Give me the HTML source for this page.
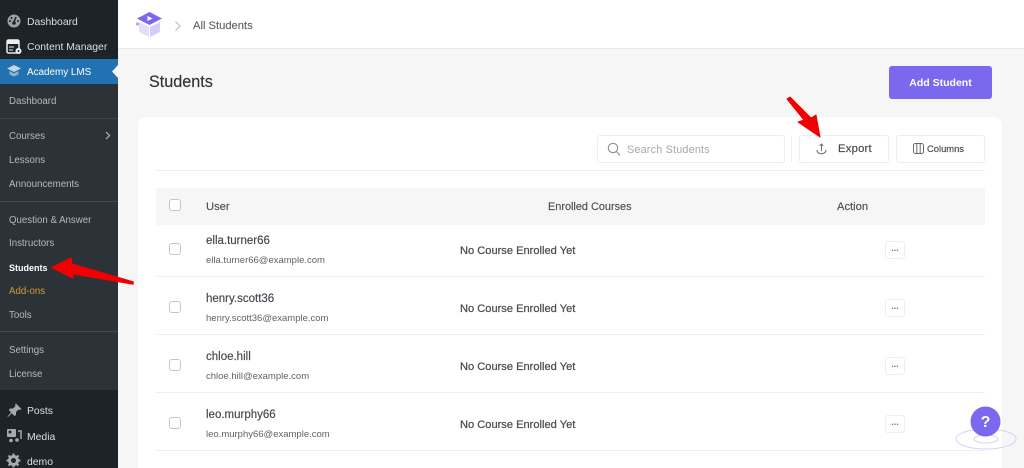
<!DOCTYPE html>
<html><head><meta charset="utf-8"><style>
html,body{margin:0;padding:0;height:468px;overflow:hidden}
body{width:1024px;position:relative;background:#f6f6f7;font-family:"Liberation Sans",sans-serif}
.a{position:absolute;white-space:nowrap}
.m{color:#dcdfe2;font-size:10.4px;left:27px;line-height:14px;margin-top:1px}
.s{color:#b4b9be;font-size:9.7px;left:9px;line-height:14px;margin-top:1px}
.cb{position:absolute;left:169px;width:10px;height:10px;border:1px solid #c4c6c9;border-radius:3px;background:#fff}
.n{left:206px;font-size:11.5px;color:#41464d;line-height:14px;margin-top:1px;-webkit-text-stroke:.15px #41464d}
.e{left:206px;font-size:9.5px;color:#5d636b;line-height:12px;margin-top:1px}
.c{left:460px;font-size:11.1px;color:#4a4f55;line-height:14px;margin-top:1px;-webkit-text-stroke:.25px #4a4f55}
.l{position:absolute;left:156px;width:829px;height:1px;background:#f0f0f1}
.d{position:absolute;left:885px;width:18px;height:16px;border:1px solid #efeff1;border-radius:3px;background:#fff;color:#777;font-size:9px;line-height:12px;text-align:center;font-weight:bold}
.b{position:absolute;background:#fff;border:1px solid #eeeef0;border-radius:3px;box-sizing:border-box}
.h{top:200px;color:#4a4f55;line-height:14px;-webkit-text-stroke:.15px #4a4f55}
</style></head><body>
<div class="a" style="left:0;top:0;width:118px;height:468px;background:#1d2327"></div>
<div class="a" style="left:0;top:84px;width:118px;height:306px;background:#2c3338"></div>
<div class="a" style="left:0;top:59px;width:118px;height:25px;background:#2271b1"></div>
<svg class="a" style="left:112px;top:65px" width="6" height="13"><path d="M6 0V13L0 6.500Z" fill="#f6f6f7"/></svg>
<div class="a" style="left:0;top:118px;width:118px;height:1px;background:#3c4349"></div>
<div class="a" style="left:0;top:201px;width:118px;height:1px;background:#42484d"></div>
<div class="a" style="left:0;top:331px;width:118px;height:1px;background:#42484d"></div>

<svg class="a" style="left:6px;top:13px" width="16" height="16" viewBox="0 0 16 16"><circle cx="8" cy="8" r="6.500" fill="#9ca1a7"/><path d="M8 9L10 4" stroke="#1d2327" stroke-width="1.500"/><circle cx="4" cy="8" r="1" fill="#1d2327"/><circle cx="5.500" cy="5" r="1" fill="#1d2327"/><circle cx="12" cy="8" r="1" fill="#1d2327"/><circle cx="8" cy="10" r="1.800" fill="#1d2327"/></svg>
<svg class="a" style="left:6px;top:39px" width="16" height="16" viewBox="0 0 16 16"><rect x="1" y="1" width="12" height="13" rx="1.500" fill="none" stroke="#eee" stroke-width="1.500"/><rect x="1" y="1" width="12" height="4" fill="#eee"/><path d="M3 8h5M3 11h4" stroke="#eee"/><circle cx="12.500" cy="12" r="3" fill="#eee"/><circle cx="12.500" cy="12" r="1" fill="#1d2327"/></svg>
<svg class="a" style="left:6px;top:64px" width="16" height="14" viewBox="0 0 16 14"><path d="M1 4.500L8 1l7 3.500L8 8Z" fill="#c3d4e2"/><path d="M3.500 7v3.500L8 12.500l4.500-2V7L8 9.500Z" fill="#8fb3d1"/></svg>
<div class="a m" style="top:15px">Dashboard</div>
<div class="a m" style="top:40px">Content Manager</div>
<div class="a m" style="top:65px;color:#fff;font-size:9.900px">Academy LMS</div>
<div class="a s" style="top:94px">Dashboard</div>
<div class="a s" style="top:129px">Courses</div>
<svg class="a" style="left:105px;top:131px" width="6" height="9"><path d="M1 1L4.500 4.500L1 8" fill="none" stroke="#b4b9be" stroke-width="1.200"/></svg>
<div class="a s" style="top:153px">Lessons</div>
<div class="a s" style="top:177px">Announcements</div>
<div class="a s" style="top:213px">Question &amp; Answer</div>
<div class="a s" style="top:236px">Instructors</div>
<div class="a s" style="top:260px;color:#fff;font-weight:bold;font-size:9px">Students</div>
<div class="a s" style="top:284px;color:#d09a35">Add-ons</div>
<div class="a s" style="top:308px">Tools</div>
<div class="a s" style="top:343px">Settings</div>
<div class="a s" style="top:367px">License</div>
<svg class="a" style="left:7px;top:403px" width="15" height="15" viewBox="0 0 15 15"><path d="M9 0.500L14.500 6L13 7L11.500 6.500L9 9L9 12L7.500 13L4.800 10.200L1 14L0.500 13.500L4 9.500L1.800 7L3 5.500H6L8.500 3L8 1.800Z" fill="#a7aaad"/></svg>
<svg class="a" style="left:6px;top:428px" width="16" height="15" viewBox="0 0 16 15"><rect x="1" y="1" width="9" height="8" rx="1" fill="#a7aaad"/><circle cx="4" cy="4" r="1.500" fill="#1d2327"/><path d="M12 3h3v8" fill="none" stroke="#a7aaad" stroke-width="1.500"/><circle cx="5" cy="12.500" r="1.800" fill="#a7aaad"/><circle cx="11" cy="12" r="1.800" fill="#a7aaad"/></svg>
<svg class="a" style="left:6px;top:453px" width="15" height="15" viewBox="0 0 15 15"><circle cx="7.500" cy="7.500" r="4" fill="none" stroke="#a7aaad" stroke-width="3"/><path d="M7.500 0.500v3M7.500 11.500v3M0.500 7.500h3M11.500 7.500h3M2.500 2.500l2 2M10.500 10.500l2 2M12.500 2.500l-2 2M4.500 10.500l-2 2" stroke="#a7aaad" stroke-width="2"/></svg>
<div class="a m" style="top:404px">Posts</div>
<div class="a m" style="top:430px">Media</div>
<div class="a m" style="top:455px">demo</div>

<div class="a" style="left:118px;top:0;width:906px;height:48px;background:#fff;border-bottom:1px solid #e9e9eb"></div>
<svg class="a" style="left:135px;top:11px" width="29" height="27" viewBox="0 0 29 27"><path d="M14.500 1L27 7.500L14.500 14L2 7.500Z" fill="#7b68ee"/><path d="M12.500 5L17.500 7.500L12.500 10Z" fill="#fff"/><path d="M4 11L14 16V26L4 21Z" fill="#e2defc"/><path d="M25 11L15 16V26L25 21Z" fill="#d3cdfa"/><circle cx="2.500" cy="13" r="1.500" fill="#a99df5"/></svg>
<svg class="a" style="left:174px;top:21px" width="8" height="10"><path d="M1.500 .5L6 5L1.500 9.500" fill="none" stroke="#b5b7ba" stroke-width="1"/></svg>
<div class="a" style="left:193px;top:19px;font-size:11.2px;color:#62666c;line-height:14px;-webkit-text-stroke:.15px #62666c">All Students</div>
<div class="a" style="left:149px;top:73px;font-size:16.2px;color:#2e3137;line-height:19px;-webkit-text-stroke:.15px #2e3137">Students</div>
<div class="a" style="left:889px;top:66px;width:103px;height:33px;background:#7b68ee;border-radius:3px;color:#fff;font-size:10.500px;font-weight:bold;line-height:34px;text-align:center">Add Student</div>

<div class="a" style="left:138px;top:117px;width:864px;height:351px;background:#fff;border-radius:8px 8px 0 0"></div>
<div class="b" style="left:597px;top:135px;width:188px;height:28px"></div>
<svg class="a" style="left:607px;top:142px" width="14" height="15" viewBox="0 0 14 15"><circle cx="6" cy="6" r="4.700" fill="none" stroke="#8f9297" stroke-width="1.100"/><path d="M9.500 9.500L13 13.500" stroke="#8f9297" stroke-width="1.100"/></svg>
<div class="a" style="left:627px;top:143px;font-size:10.800px;color:#a4a7ab;line-height:14px;letter-spacing:.2px">Search Students</div>
<div class="a" style="left:791px;top:135px;width:1px;height:28px;background:#f0f0f1"></div>
<div class="b" style="left:799px;top:135px;width:90px;height:28px"></div>
<svg class="a" style="left:816px;top:143px" width="11" height="12" viewBox="0 0 11 12"><path d="M5.500 1V8M3.700 2.800L5.500 1L7.300 2.800M1 7C1 12 10 12 10 7" fill="none" stroke="#666a70" stroke-width="1"/></svg>
<div class="a" style="left:838px;top:142px;font-size:11.300px;color:#44484e;line-height:14px;letter-spacing:.2px;-webkit-text-stroke:.15px #44484e">Export</div>
<div class="b" style="left:896px;top:135px;width:89px;height:28px"></div>
<svg class="a" style="left:913px;top:143px" width="11" height="11" viewBox="0 0 11 11"><rect x=".5" y=".5" width="10" height="10" rx="2" fill="none" stroke="#666a70"/><path d="M3.800 .5V10.500M7.200 .5V10.500" stroke="#666a70"/></svg>
<div class="a" style="left:927px;top:142px;font-size:9.400px;color:#44484e;line-height:14px;-webkit-text-stroke:.15px #44484e">Columns</div>
<div class="l" style="top:170px"></div>

<div class="a" style="left:156px;top:188px;width:829px;height:37px;background:#f6f6f7"></div>
<div class="cb" style="top:199px"></div>
<div class="a h" style="left:206px;font-size:11.200px">User</div>
<div class="a h" style="left:548px;font-size:10.900px">Enrolled Courses</div>
<div class="a h" style="left:837px;font-size:11.200px">Action</div>

<div class="cb" style="top:243px"></div>
<div class="a n" style="top:233px">ella.turner66</div>
<div class="a e" style="top:254px">ella.turner66@example.com</div>
<div class="a c" style="top:243px">No Course Enrolled Yet</div>
<div class="d" style="top:241px">...</div>
<div class="l" style="top:276px"></div>

<div class="cb" style="top:301px"></div>
<div class="a n" style="top:291px">henry.scott36</div>
<div class="a e" style="top:312px">henry.scott36@example.com</div>
<div class="a c" style="top:301px">No Course Enrolled Yet</div>
<div class="d" style="top:299px">...</div>
<div class="l" style="top:334px"></div>

<div class="cb" style="top:359px"></div>
<div class="a n" style="top:349px">chloe.hill</div>
<div class="a e" style="top:370px">chloe.hill@example.com</div>
<div class="a c" style="top:359px">No Course Enrolled Yet</div>
<div class="d" style="top:357px">...</div>
<div class="l" style="top:392px"></div>

<div class="cb" style="top:417px"></div>
<div class="a n" style="top:407px">leo.murphy66</div>
<div class="a e" style="top:428px">leo.murphy66@example.com</div>
<div class="a c" style="top:417px">No Course Enrolled Yet</div>
<div class="d" style="top:415px">...</div>
<div class="l" style="top:450px"></div>

<svg class="a" style="left:950px;top:400px" width="74" height="56" viewBox="0 0 74 56"><ellipse cx="36" cy="39" rx="30" ry="10" fill="none" stroke="#d5d0fb"/><ellipse cx="36" cy="39" rx="12" ry="4" fill="none" stroke="#d5d0fb"/><circle cx="35.500" cy="21.500" r="15" fill="#7b68ee"/><text x="35.500" y="27" text-anchor="middle" font-family="Liberation Sans,sans-serif" font-size="16" font-weight="bold" fill="#fff">?</text></svg>

<svg class="a" style="left:0;top:0" width="1024" height="468"><path d="M133 284L72 273.500L73 278L52 267.500L71 258L71.500 264L133 282Z" fill="#f00002" stroke="#f00002" stroke-width="1.500" stroke-linejoin="round"/><path d="M787 99L790 97L811 118L816 115L820 137L798 122L804 120Z" fill="#f00002" stroke="#f00002" stroke-width="1" stroke-linejoin="round"/></svg>
</body></html>
